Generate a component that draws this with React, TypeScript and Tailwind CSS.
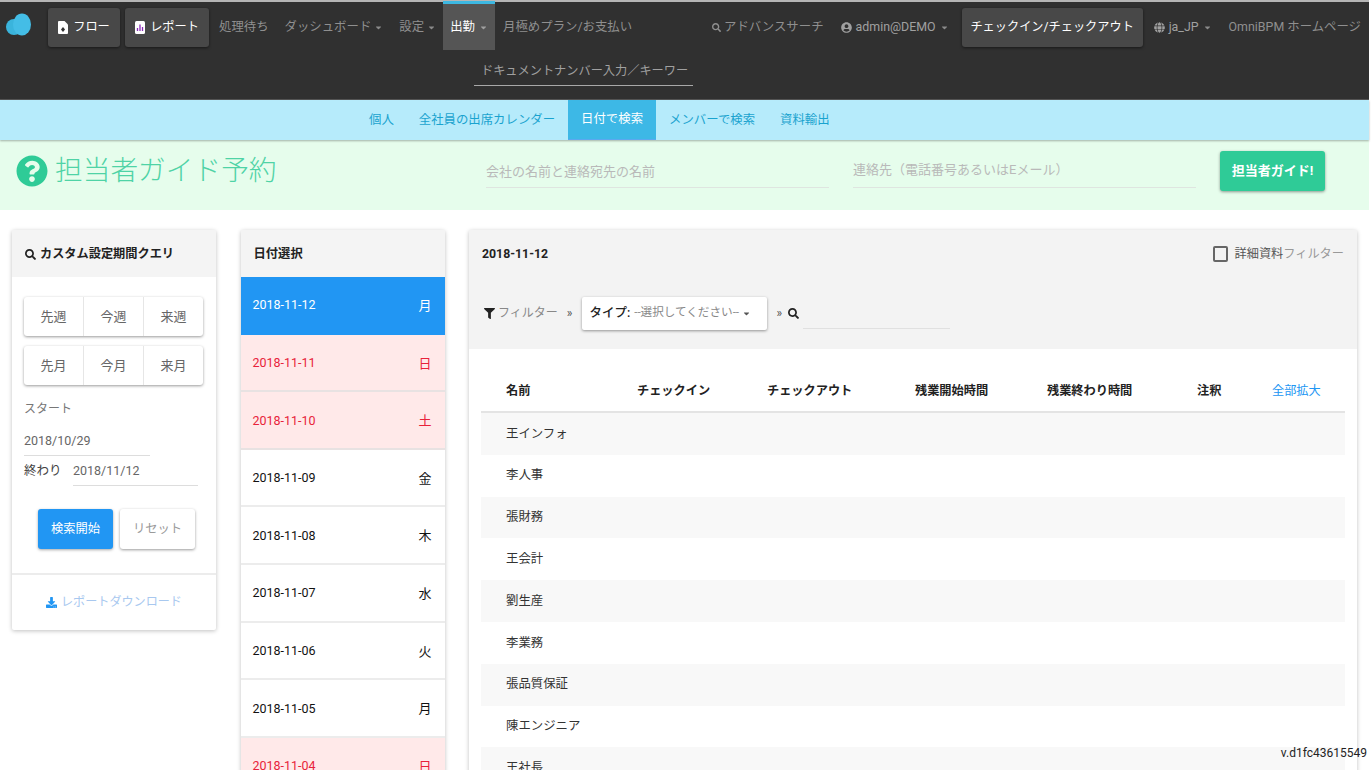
import { FaCaretDown, FaDownload, FaFilter, FaGlobe, FaQuestionCircle, FaSearch, FaUserCircle } from "react-icons/fa";

const Caret = ({ className = "text-[#8a8a8a]" }: { className?: string }) => (
  <FaCaretDown className={`w-[9px] h-[9px] ${className}`} />
);

const NavLink = ({ children, caret, className = "" }: any) => (
  <div className={`flex items-center gap-[3px] h-[50px] text-[12.4px] text-[#8f8f8f] whitespace-nowrap ${className}`}>
    {children}
    {caret && <Caret />}
  </div>
);

const NavButton = ({ children, className = "" }: any) => (
  <div className={`flex items-center justify-center h-[39px] mt-[6px] bg-[#484848] rounded-[3px] shadow-[0_1px_3px_rgba(0,0,0,0.5)] text-[12.2px] text-white whitespace-nowrap ${className}`}>
    {children}
  </div>
);

const TopNav = () => (
  <nav className="h-[100px] shrink-0 bg-[#303030] border-t-2 border-[#b5b5b5] border-b border-b-[#555]">
    <div className="flex items-start h-[60px]">
      {/* Logo */}
      <svg width="28" height="28" viewBox="0 0 28 28" className="ml-[5px] mt-[9px] shrink-0">
        <circle cx="9" cy="16" r="8" fill="#3ab4dc" />
        <ellipse cx="17" cy="13.5" rx="9" ry="11" fill="#44bde6" />
      </svg>
      <NavButton className="w-[72px] ml-[15px] gap-[5px]">
        <svg width="10" height="13" viewBox="0 0 10 13">
          <path d="M0 1 Q0 0 1 0 H6.5 L10 3.5 V12 Q10 13 9 13 H1 Q0 13 0 12 Z" fill="#fff" />
          <path d="M5 6 L7 8.5 L5 11 L3 8.5 Z" fill="#333" />
        </svg>
        フロー
      </NavButton>
      <NavButton className="w-[84px] ml-[5px] gap-[5px]">
        <svg width="10" height="13" viewBox="0 0 10 13">
          <rect width="10" height="13" rx="1.5" fill="#fff" />
          <path d="M2.5 10 V7 M5 10 V3.5 M7.5 10 V6" stroke="#8a2bb8" strokeWidth="1.3" />
        </svg>
        レポート
      </NavButton>
      <NavLink className="ml-[10px]">処理待ち</NavLink>
      <NavLink caret className="ml-[16px] text-[#6f6f6f]">ダッシュボード</NavLink>
      <NavLink caret className="ml-[16px]">設定</NavLink>
      <div className="flex items-center justify-center gap-[4px] w-[52px] h-[49px] ml-[7px] mt-[-1px] bg-[#555] border-t-[3px] border-[#3db8e2] text-[12.4px] text-white">
        出勤
        <Caret className="text-[#a0a0a0]" />
      </div>
      <NavLink className="ml-[8px]">月極めプラン/お支払い</NavLink>
      <div className="flex items-start ml-auto pr-[8px]">
        <NavLink className="gap-[1px]">
          <FaSearch className="w-[9px] h-[9px]" />
          アドバンスサーチ
        </NavLink>
        <NavLink caret className="ml-[17px] gap-[4px] text-[#a0a0a0]">
          <FaUserCircle className="w-[11px] h-[11px]" />
          admin@DEMO
        </NavLink>
        <NavButton className="w-[181px] ml-[13px]">チェックイン/チェックアウト</NavButton>
        <NavLink caret className="ml-[11px] gap-[4px] text-[#a0a0a0]">
          <FaGlobe className="w-[11px] h-[11px]" />
          ja_JP
        </NavLink>
        <NavLink className="ml-[17px]">OmniBPM ホームページ</NavLink>
      </div>
    </div>
    <div className="ml-[474px] w-[219px] h-[24px] border-b border-[#a8a8a8] text-[12.2px] leading-[19px] text-[#a0a0a0] pl-[7px] whitespace-nowrap">
      ドキュメントナンバー入力／キーワー
    </div>
  </nav>
);

const SubNav = () => (
  <div className="flex items-stretch h-[40px] shrink-0 bg-[#b6ebfb] shadow-[0_1px_2px_rgba(0,0,0,0.3)] text-[12.4px] text-[#1aa3cf] pl-[369px] z-10 relative">
    <div className="flex items-center">個人</div>
    <div className="flex items-center ml-[25px]">全社員の出席カレンダー</div>
    <div className="flex items-center justify-center w-[88px] ml-[13px] bg-[#3db8e6] text-white border-b border-[#5ba8f0]">日付で検索</div>
    <div className="flex items-center ml-[13px]">メンバーで検索</div>
    <div className="flex items-center ml-[25px]">資料輸出</div>
  </div>
);

const GuideBar = () => (
  <div className="flex items-start h-[70px] shrink-0 bg-[#e6fdec]">
    <FaQuestionCircle className="w-[32px] h-[38px] ml-[16px] mt-[12px] text-[#2fcb97]" />
    <div className="w-[224px] ml-[7px] mt-[10px] text-[27.7px] leading-[42px] font-light text-[#4fd3a6] whitespace-nowrap">担当者ガイド予約</div>
    <div className="w-[343px] h-[48px] ml-[207px] border-b border-[#dfe5e0] pt-[22px] text-[13px] leading-[20px] text-[#b9b9b9]">会社の名前と連絡宛先の名前</div>
    <div className="w-[343px] h-[48px] ml-[24px] border-b border-[#dfe5e0] pt-[20px] text-[13px] leading-[20px] text-[#b9b9b9]">連絡先（電話番号あるいはEメール）</div>
    <div className="flex items-center justify-center w-[105px] h-[40px] ml-[24px] mt-[11px] bg-[#2fcb97] rounded-[3px] shadow-[0_1px_3px_rgba(0,0,0,0.4)] text-[13px] font-bold text-white">担当者ガイド!</div>
  </div>
);

const SegmentRow = ({ items }: { items: string[] }) => (
  <div className="flex h-[39px] w-[179px] rounded-[3px] bg-white shadow-[0_1px_3px_rgba(0,0,0,0.4)]">
    {items.map((item, i) => (
      <div key={item} className={`flex-1 flex items-center justify-center text-[13px] text-[#666] ${i > 0 ? "border-l border-[#e6e6e6]" : ""}`}>
        {item}
      </div>
    ))}
  </div>
);

const QueryCard = () => (
  <div className="w-[204px] h-[400px] shrink-0 bg-white rounded-[2px] shadow-[0_1px_4px_rgba(0,0,0,0.25)]">
    <div className="flex items-center gap-[4px] h-[47px] bg-[#f4f4f4] pl-[13px] text-[12.2px] font-bold text-[#222] pt-[1px]">
      <FaSearch className="w-[11px] h-[11px]" />
      カスタム設定期間クエリ
    </div>
    <div className="flex flex-col gap-[10px] pl-[12px] pt-[20px]">
      <SegmentRow items={["先週", "今週", "来週"]} />
      <SegmentRow items={["先月", "今月", "来月"]} />
    </div>
    <div className="ml-[12px] mt-[16px] text-[12px] leading-[16px] text-[#777]">スタート</div>
    <div className="ml-[12px] w-[126px] h-[29px] mt-[10px] border-b border-[#ddd] pt-[4px] text-[12.5px] leading-[20px] text-[#666]">2018/10/29</div>
    <div className="flex items-start ml-[12px]">
      <div className="w-[49px] pt-[5px] text-[12.5px] leading-[20px] text-[#444]">終わり</div>
      <div className="w-[125px] h-[30px] border-b border-[#ddd] pt-[5px] text-[12.5px] leading-[20px] text-[#666]">2018/11/12</div>
    </div>
    <div className="flex ml-[26px] mt-[23px] gap-[7px]">
      <div className="flex items-center justify-center w-[75px] h-[40px] bg-[#2196f3] rounded-[3px] shadow-[0_1px_3px_rgba(0,0,0,0.35)] text-[12.3px] text-white">検索開始</div>
      <div className="flex items-center justify-center w-[75px] h-[40px] bg-white rounded-[3px] shadow-[0_1px_3px_rgba(0,0,0,0.4)] text-[12.3px] text-[#999]">リセット</div>
    </div>
    <div className="flex items-center justify-center gap-[4px] h-[56px] mt-[24px] border-t-2 border-[#ececec] text-[12.1px] text-[#a8c8ef]">
      <FaDownload className="w-[11px] h-[11px] text-[#2196f3]" />
      レポートダウンロード
    </div>
  </div>
);

const days = [
  { date: "2018-11-12", day: "月", tone: "active" },
  { date: "2018-11-11", day: "日", tone: "off" },
  { date: "2018-11-10", day: "土", tone: "off" },
  { date: "2018-11-09", day: "金", tone: "" },
  { date: "2018-11-08", day: "木", tone: "" },
  { date: "2018-11-07", day: "水", tone: "" },
  { date: "2018-11-06", day: "火", tone: "" },
  { date: "2018-11-05", day: "月", tone: "" },
  { date: "2018-11-04", day: "日", tone: "off" },
];

const DateCard = () => (
  <div className="w-[204px] shrink-0 bg-white shadow-[0_1px_4px_rgba(0,0,0,0.25)] rounded-[2px]">
    <div className="flex items-center h-[47px] bg-[#f4f4f4] pl-[13px] pt-[1px] text-[12.3px] font-bold text-[#222]">日付選択</div>
    {days.map((d) => (
      <div
        key={d.date}
        className={`flex items-center justify-between h-[57.6px] pl-[12px] pr-[13px] pt-[2px] text-[12.5px] border-b-2 ${
          d.tone === "active"
            ? "bg-[#2196f3] text-white border-[#2196f3]"
            : d.tone === "off"
              ? "bg-[#ffe9e9] text-[#e8223a] border-[#e8e2e2]"
              : "bg-white text-[#111] border-[#ececec]"
        }`}
      >
        <span>{d.date}</span>
        <span className="text-[13px]">{d.day}</span>
      </div>
    ))}
  </div>
);

const names = ["王インフォ", "李人事", "張財務", "王会計", "劉生産", "李業務", "張品質保証", "陳エンジニア", "王社長"];

const headers = [
  { label: "チェックイン", w: "w-[130px]" },
  { label: "チェックアウト", w: "w-[148px]" },
  { label: "残業開始時間", w: "w-[132px]" },
  { label: "残業終わり時間", w: "w-[150px]" },
  { label: "注釈", w: "w-[75px]" },
];

const AttendanceCard = () => (
  <div className="flex-1 bg-white shadow-[0_1px_4px_rgba(0,0,0,0.25)] rounded-[2px]">
    <div className="h-[119px] bg-[#f3f3f3] px-[13px]">
      <div className="flex items-center justify-between h-[47px] pt-[1px]">
        <span className="text-[12.3px] font-bold text-[#222]">2018-11-12</span>
        <div className="flex items-center gap-[7px] text-[12.2px] text-[#555]">
          <span className="w-[15px] h-[16px] border-2 border-[#666] rounded-[2px]" />
          <span>詳細資料<span className="text-[#999]">フィルター</span></span>
        </div>
      </div>
      <div className="flex items-center h-[34px] mt-[19px] text-[12px] text-[#888]">
        <FaFilter className="w-[11px] h-[11px] text-[#222] ml-[2px] mr-[3px]" />
        フィルター
        <span className="ml-[9px] text-[#555]">»</span>
        <div className="flex items-center w-[185px] h-[33px] ml-[10px] pl-[7px] bg-white rounded-[2px] shadow-[0_1px_3px_rgba(0,0,0,0.4)] whitespace-nowrap">
          <span className="text-[12.5px] font-medium text-[#222]">タイプ:</span>
          <span className="ml-[4px] text-[11.6px] text-[#888]">--選択してください--</span>
          <Caret className="text-[#555] ml-[3px]" />
        </div>
        <span className="ml-[9px] text-[#555]">»</span>
        <FaSearch className="w-[11px] h-[11px] ml-[6px] text-[#222]" />
        <div className="w-[147px] h-[30px] ml-[4px] mt-[1px] border-b border-[#e0e0e0]" />
      </div>
    </div>
    <div className="mx-[12px] mt-[22px]">
      <div className="flex items-center h-[42px] border-b-2 border-[#e4e4e4] text-[12.2px] font-bold text-[#222] whitespace-nowrap">
        <span className="w-[156px] pl-[25px]">名前</span>
        {headers.map((h) => (
          <span key={h.label} className={h.w}>{h.label}</span>
        ))}
        <span className="font-normal text-[#2196f3]">全部拡大</span>
      </div>
      {names.map((name, i) => (
        <div key={name} className={`flex items-center h-[41.8px] pl-[25px] text-[12.4px] text-[#333] ${i % 2 === 0 ? "bg-[#f8f8f8]" : "bg-white"}`}>
          {name}
        </div>
      ))}
    </div>
  </div>
);

export default function App() {
  return (
    <div className="relative flex flex-col h-screen overflow-hidden bg-white pr-[3px] font-['Roboto','Noto_Sans_CJK_JP',sans-serif]">
      <TopNav />
      <SubNav />
      <GuideBar />
      <main className="flex items-start gap-[24.5px] pl-[12px] pr-[12px] pt-[20px]">
        <QueryCard />
        <DateCard />
        <AttendanceCard />
      </main>
      <div className="absolute right-[5px] bottom-[8px] text-[12px] text-[#222]">v.d1fc43615549</div>
    </div>
  );
}
